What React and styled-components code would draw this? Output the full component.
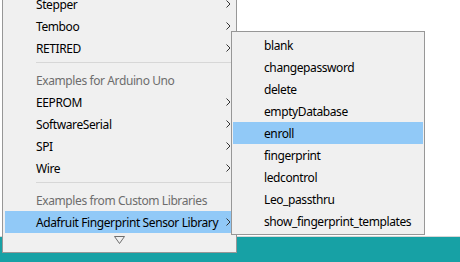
import React from "react";
import styled, { createGlobalStyle } from "styled-components";

const GlobalStyle = createGlobalStyle`
  html, body {
    margin: 0;
    padding: 0;
    background: #fff;
    overflow: hidden;
  }
  * { box-sizing: border-box; }
`;

const Screen = styled.div`
  position: relative;
  width: 460px;
  height: 262px;
  display: flex;
  flex-direction: column;
  overflow: hidden;
  font-family: "Noto Sans", "Open Sans", sans-serif;
  font-size: 12px;
  letter-spacing: -0.4px;
`;

const Editor = styled.div`
  flex: 1;
  background: #fff;
`;

const Console = styled.div`
  height: 26px;
  background: #17a1a5;
  border-top: 1px solid #d6d6d6;
`;

const Menu = styled.div`
  position: absolute;
  left: ${(p) => p.left}px;
  top: ${(p) => p.top}px;
  width: ${(p) => p.width}px;
  display: flex;
  flex-direction: column;
  background: #f0f0f0;
  border: 1px solid #979797;
  padding: 2px ${(p) => p.inset}px;
`;

const Item = styled.div`
  height: 22px;
  display: flex;
  align-items: center;
  padding-left: ${(p) => p.indent}px;
  padding-right: 3px;
  color: ${(p) => (p.header ? "#6d6d6d" : "#000")};
  background: ${(p) => (p.active ? "#91c9f7" : "transparent")};
  white-space: nowrap;
`;

const Label = styled.span`
  flex: 1;
`;

const Separator = styled.div`
  height: 10px;
  margin-left: 31px;
  padding-top: 3px;
  &::before {
    content: "";
    display: block;
    height: 1px;
    background: #d7d7d7;
  }
`;

const ScrollDown = styled.div`
  height: 17px;
  display: flex;
  justify-content: center;
  align-items: flex-start;
  padding-top: 3px;
`;

const Chevron = () => (
  <svg width="5" height="8" viewBox="0 0 5 8">
    <path d="M0.5 0.5 L4 4 L0.5 7.5" fill="none" stroke="#333" strokeWidth="1" />
  </svg>
);

const mainItems = [
  { label: "Stepper", sub: true },
  { label: "Temboo", sub: true },
  { label: "RETIRED", sub: true },
  { sep: true },
  { label: "Examples for Arduino Uno", header: true },
  { label: "EEPROM", sub: true },
  { label: "SoftwareSerial", sub: true },
  { label: "SPI", sub: true },
  { label: "Wire", sub: true },
  { sep: true },
  { label: "Examples from Custom Libraries", header: true },
  { label: "Adafruit Fingerprint Sensor Library", sub: true, active: true },
];

const examples = [
  "blank",
  "changepassword",
  "delete",
  "emptyDatabase",
  "enroll",
  "fingerprint",
  "ledcontrol",
  "Leo_passthru",
  "show_fingerprint_templates",
];

const App = () => {
  return (
    <Screen>
      <GlobalStyle />
      <Editor />
      <Console />

      <Menu left={2} top={-10} width={235} inset={2}>
        {mainItems.map((it, i) =>
          it.sep ? (
            <Separator key={i} />
          ) : (
            <Item key={i} indent={31} header={it.header} active={it.active}>
              <Label>{it.label}</Label>
              {it.sub && <Chevron />}
            </Item>
          )
        )}
        <ScrollDown>
          <svg width="11" height="8" viewBox="0 0 11 8">
            <path d="M0.5 0.5 L10.5 0.5 L5.5 7.5 Z" fill="none" stroke="#6d6d6d" strokeWidth="1" />
          </svg>
        </ScrollDown>
      </Menu>

      <Menu left={231} top={31} width={194} inset={1}>
        {examples.map((name) => (
          <Item key={name} indent={31} active={name === "enroll"}>
            <Label>{name}</Label>
          </Item>
        ))}
      </Menu>
    </Screen>
  );
};

export default App;
